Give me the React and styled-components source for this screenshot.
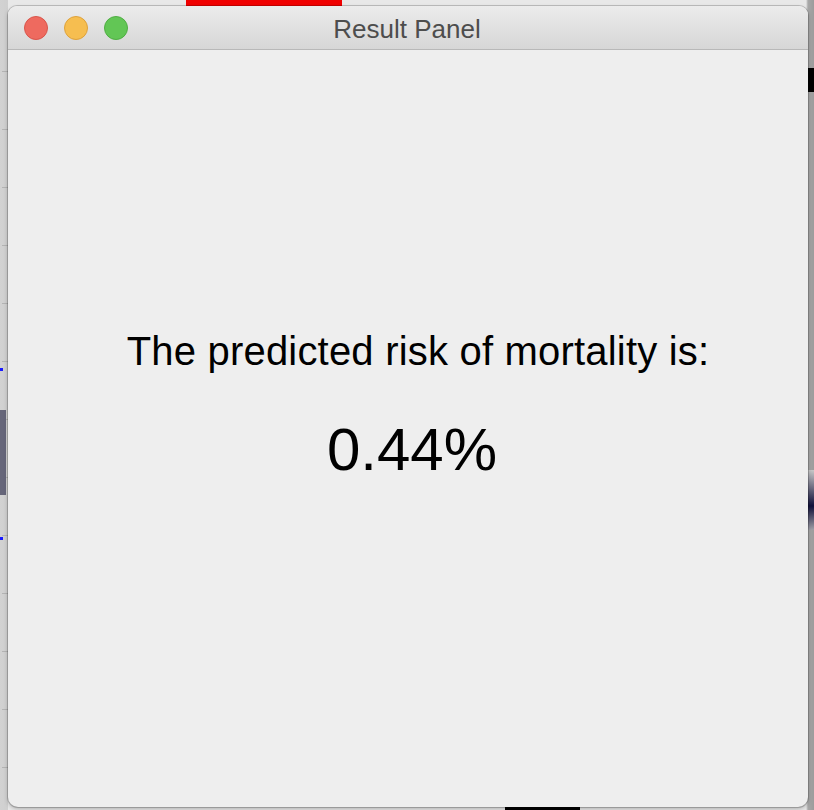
import React from 'react';
import styled, { createGlobalStyle } from 'styled-components';

const GlobalStyle = createGlobalStyle`
  html, body {
    margin: 0;
    padding: 0;
    width: 814px;
    height: 810px;
    overflow: hidden;
    background: #d6d6d6;
  }
`;

const solid = (c) => `linear-gradient(${c}, ${c})`;

// the desktop, with the edges of the windows behind showing round the panel
const Desktop = styled.div`
  width: 814px;
  height: 810px;
  box-sizing: border-box;
  padding: 6px 6px 3px 8px;
  font-family: "Liberation Sans", Arial, sans-serif;
  background:
    ${solid('#f00000')} 186px 0 / 156px 6px no-repeat,
    ${solid('#66667a')} 0 410px / 6px 85px no-repeat,
    ${solid('#1a1aff')} 0 368px / 3px 3px no-repeat,
    ${solid('#1a1aff')} 0 537px / 3px 3px no-repeat,
    ${solid('#000')} 808px 68px / 6px 24px no-repeat,
    linear-gradient(180deg, #c8c8c8, #10103a 60%, #a0a0a8) 808px 470px / 6px 60px no-repeat,
    ${solid('#000')} 505px 807px / 75px 3px no-repeat,
    repeating-linear-gradient(180deg, transparent 0 57px, #b4b4b4 57px 58px) 2px 14px / 6px 796px no-repeat,
    linear-gradient(90deg, #d2d2d2 0, #cfcfcf 8px, #e8e8e8 8px, #e8e8e8 806px, #a8a8a8 808px, #9c9c9c 814px);
`;

const Window = styled.div`
  display: flex;
  flex-direction: column;
  width: 800px;
  height: 801px;
  background: #eeeeee;
  border-radius: 9px 9px 10px 10px;
  box-shadow: 0 0 0 1px rgba(0, 0, 0, 0.18), 0 2px 4px rgba(0, 0, 0, 0.25);
  overflow: hidden;
`;

const TitleBar = styled.div`
  display: grid;
  grid-template-columns: 1fr auto 1fr;
  align-items: center;
  height: 43px;
  flex-shrink: 0;
  padding: 0 16px;
  background: linear-gradient(180deg, #ececec 0%, #d6d6d6 100%);
  border-bottom: 1px solid #b8b8b8;
`;

const Lights = styled.div`
  display: flex;
  gap: 16px;
  margin-top: 1px;
`;

const Light = styled.span`
  display: block;
  width: 22px;
  height: 22px;
  border-radius: 50%;
  background: ${({ color }) => color};
  border: 1px solid ${({ edge }) => edge};
`;

const Title = styled.div`
  font-size: 26px;
  color: #4d4d4d;
  margin-top: 4px;
  margin-right: 2px;
`;

const Body = styled.div`
  flex: 1;
  display: flex;
  flex-direction: column;
  align-items: center;
  padding-top: 279px;
`;

const Label = styled.div`
  font-size: 40px;
  letter-spacing: 0.2px;
  color: #000;
  line-height: 44px;
  padding-left: 20px;
`;

const Value = styled.div`
  margin-top: 45px;
  font-size: 60px;
  color: #000;
  line-height: 64px;
  padding-left: 8px;
`;

const App = () => {
  return (
    <>
      <GlobalStyle />
      <Desktop>
        <Window>
          <TitleBar>
            <Lights>
              <Light color="#ee6a5f" edge="#d9554b" />
              <Light color="#f6be50" edge="#dea23c" />
              <Light color="#62c655" edge="#4fae43" />
            </Lights>
            <Title>Result Panel</Title>
          </TitleBar>
          <Body>
            <Label>The predicted risk of mortality is:</Label>
            <Value>0.44%</Value>
          </Body>
        </Window>
      </Desktop>
    </>
  );
};

export default App;
